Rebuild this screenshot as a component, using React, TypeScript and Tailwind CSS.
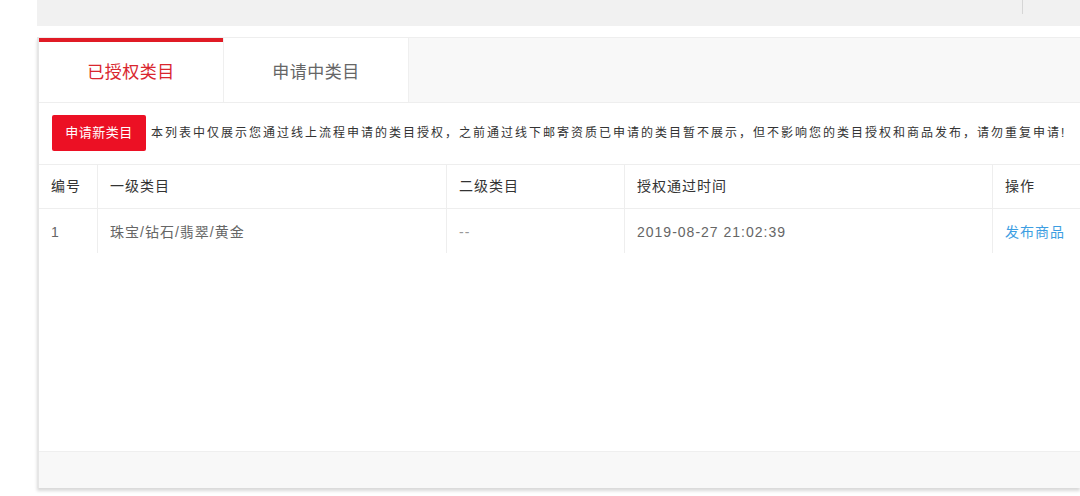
import React from 'react'

const columns = ['编号', '一级类目', '二级类目', '授权通过时间', '操作']

const rows = [
  {
    id: '1',
    first: '珠宝/钻石/翡翠/黄金',
    second: '--',
    time: '2019-08-27 21:02:39',
  },
]

const font = "font-['Liberation_Sans','Noto_Sans_CJK_SC',sans-serif]"

const App = () => {
  return (
    <div className={`flex h-[496px] w-[1080px] overflow-hidden bg-white ${font}`}>
      <div className="w-[37px] shrink-0" />
      <div className="flex min-w-0 flex-1 flex-col">
        {/* top bar */}
        <div className="relative h-[26px] shrink-0 bg-[#f1f1f1]">
          <div className="absolute left-[985px] top-0 h-[14px] w-px bg-[#d6d6d6]" />
        </div>
        <div className="h-[11px] shrink-0" />

        {/* main panel */}
        <div className="flex h-[451px] flex-col border-l-2 border-[#e6e6e6] shadow-[0_3px_3px_rgba(0,0,0,0.15)]">
          {/* tabs */}
          <div className="flex h-[66px] shrink-0 border-y border-[#eeeeee] bg-[#f8f8f8]">
            <div className="flex w-[184px] items-center justify-center border-t-4 border-[#e01b25] bg-white pt-[2px] text-[17px] tracking-[0.5px] text-[#d9262e]">
              已授权类目
            </div>
            <div className="flex w-[186px] items-center justify-center border-x border-[#efefef] bg-white pt-[6px] text-[17px] tracking-[0.5px] text-[#666]">
              申请中类目
            </div>
          </div>

          {/* body */}
          <div className="flex flex-1 flex-col bg-white">
            <div className="flex items-center px-[13px] pb-[13px] pt-[12px]">
              <button className="h-[36px] w-[94px] shrink-0 rounded-[2px] bg-[#ec1024] text-[13px] tracking-[0.5px] text-white">
                申请新类目
              </button>
              <span className="ml-[5px] whitespace-nowrap text-[12px] tracking-[2px] text-[#333]">
                本列表中仅展示您通过线上流程申请的类目授权，之前通过线下邮寄资质已申请的类目暂不展示，但不影响您的类目授权和商品发布，请勿重复申请!
              </span>
            </div>

            <div className="grid grid-cols-[59px_349px_178px_368px_1fr] border-t border-[#eeeeee] text-[14px] tracking-[1px]">
              {columns.map((c, i) => (
                <div
                  key={c}
                  className={`flex h-[44px] items-center border-b border-[#eeeeee] pl-[12px] text-[#333] ${i < 4 ? 'border-r' : ''}`}
                >
                  {c}
                </div>
              ))}
              {rows.map((r) => (
                <React.Fragment key={r.id}>
                  <div className="flex h-[44px] items-center border-r border-[#eeeeee] pl-[12px] pt-[2px] text-[#666]">
                    {r.id}
                  </div>
                  <div className="flex h-[44px] items-center border-r border-[#eeeeee] pl-[12px] pt-[2px] text-[#666]">
                    {r.first}
                  </div>
                  <div className="flex h-[44px] items-center border-r border-[#eeeeee] pl-[12px] pt-[2px] text-[#999]">
                    {r.second}
                  </div>
                  <div className="flex h-[44px] items-center border-r border-[#eeeeee] pl-[12px] pt-[2px] text-[#666]">
                    {r.time}
                  </div>
                  <div className="flex h-[44px] items-center pl-[12px] pt-[2px] text-[#3d9ee2]">
                    发布商品
                  </div>
                </React.Fragment>
              ))}
            </div>
          </div>

          {/* footer */}
          <div className="h-[37px] shrink-0 border-t border-[#efefef] bg-[#f8f8f8]" />
        </div>
      </div>
    </div>
  )
}

export default App
